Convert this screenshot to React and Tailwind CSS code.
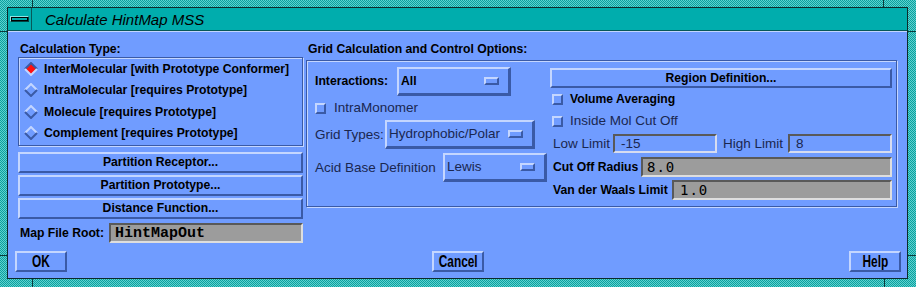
const raised = "border-2 border-t-[#c4d6ff] border-l-[#c4d6ff] border-b-[#3a5aa6] border-r-[#3a5aa6]";
const menuBevel = "border-t-2 border-l-2 border-b-[3px] border-r-[3px] border-t-[#c4d6ff] border-l-[#c4d6ff] border-b-[#3a5aa6] border-r-[#3a5aa6]";
const sunkenGray = "border-2 border-t-[#595959] border-l-[#595959] border-b-[#dedede] border-r-[#dedede] bg-[#9c9c9c]";
const sunkenOff = "border-2 border-t-[#595959] border-l-[#595959] border-b-[#d6dcf0] border-r-[#d6dcf0]";
const etched = "border border-[#3a5aa6] shadow-[inset_1px_1px_0_#c4d6ff,1px_1px_0_#c4d6ff]";
const off = "text-[#1a2750] font-normal text-[13.5px]";
const bold = "font-bold text-[12.2px]";
const stipple = "bg-[repeating-conic-gradient(#5ed2ce_0%_25%,#0c9f9f_0%_50%)] bg-size-[2px_2px]";

function Diamond({ on }) {
  return (
    <svg width="14" height="14" viewBox="0 0 14 14" className="shrink-0">
      <polygon points="7,1 13,7 7,13 1,7" fill={on ? "#ff1010" : "#709cff"} />
      <polyline points="1,7 7,1 13,7" fill="none" stroke={on ? "#3a5aa6" : "#c4d6ff"} strokeWidth="2" />
      <polyline points="1,7 7,13 13,7" fill="none" stroke={on ? "#c4d6ff" : "#3a5aa6"} strokeWidth="2" />
    </svg>
  );
}

function Check() {
  return <div className={`w-[11px] h-[11px] shrink-0 ${raised}`} />;
}

function OptionMenu({ value, width, disabled }) {
  return (
    <div className={`h-[29px] ${width} ${menuBevel} flex items-center justify-between pl-[2px] pr-[9px]`}>
      <span className={disabled ? off : bold}>{value}</span>
      <div className={`w-[15px] h-[8px] ${raised}`} />
    </div>
  );
}

function PushButton({ children }) {
  return (
    <div className={`h-[21px] ${raised} flex items-center justify-center ${bold}`}>
      {children}
    </div>
  );
}

function DialogButton({ children }) {
  return (
    <div className={`w-[52px] h-[21px] ${raised} flex items-center justify-center`}>
      <span className="inline-block font-bold text-[16px] scale-x-[0.74]">{children}</span>
    </div>
  );
}

const calcTypes = [
  "InterMolecular [with Prototype Conformer]",
  "IntraMolecular [requires Prototype]",
  "Molecule [requires Prototype]",
  "Complement [requires Prototype]",
];

export default function App() {
  return (
    <div className={`relative w-[916px] h-[287px] ${stipple} pt-[7px] pl-[7px] pr-[8px] pb-[8px] flex flex-col font-['Liberation_Sans',sans-serif] text-black leading-none`}>
      {/* frame resize ticks */}
      <div className="absolute left-[32px] top-0 w-px h-[7px] bg-[#0b3b3b]" />
      <div className="absolute left-[883px] top-0 w-px h-[7px] bg-[#0b3b3b]" />
      <div className="absolute left-0 top-[31px] w-[7px] h-px bg-[#0b3b3b]" />
      <div className="absolute right-0 top-[31px] w-[8px] h-px bg-[#0b3b3b]" />
      <div className="absolute left-0 top-[255px] w-[7px] h-px bg-[#0b3b3b]" />
      <div className="absolute right-0 top-[255px] w-[8px] h-px bg-[#0b3b3b]" />
      <div className="absolute left-[32px] bottom-0 w-px h-[8px] bg-[#0b3b3b]" />
      <div className="absolute left-[884px] bottom-0 w-px h-[8px] bg-[#0b3b3b]" />

      <div className="flex-1 flex flex-col border border-[#0b2b2b]">
        {/* Title bar */}
        <div className="h-[23px] bg-[#00adad] border-b border-[#075858] flex items-center shrink-0">
          <div className="w-[24px] h-full border-r border-[#075858] flex items-center justify-center">
            <div className="w-[19px] h-[6px] border border-t-[#8fe4e4] border-l-[#8fe4e4] border-b-[#034040] border-r-[#034040] bg-[#00adad] shadow-[inset_0_0_0_1px_#000]" />
          </div>
          <span className="ml-[13px] italic text-[15px]">Calculate HintMap MSS</span>
        </div>

        {/* Body */}
        <div className="flex-1 bg-[#709cff] border-t border-[#c4d6ff] flex flex-col">
          <div className="flex items-start pl-[10px] pr-[10px] pt-[9px] gap-[3px]">
            {/* Left column */}
            <div className="w-[285px] flex flex-col">
              <div className={`h-[16px] flex items-center pl-[2px] ${bold}`}>Calculation Type:</div>
              <div className={`h-[89px] ${etched} pl-[5px]`}>
                {calcTypes.map((t, i) => (
                  <div key={t} className="h-[21.5px] flex items-center gap-[6px]">
                    <Diamond on={i === 0} />
                    <span className={bold}>{t}</span>
                  </div>
                ))}
              </div>
              <div className="mt-[6px] flex flex-col gap-[2px]">
                <PushButton>Partition Receptor...</PushButton>
                <PushButton>Partition Prototype...</PushButton>
                <PushButton>Distance Function...</PushButton>
              </div>
              <div className="mt-[4px] h-[20px] flex items-center justify-between pl-[2px]">
                <span className={bold}>Map File Root:</span>
                <div className={`w-[194px] h-[20px] ${sunkenGray} flex items-center pl-[4px]`}>
                  <span className="font-['Liberation_Mono',monospace] font-bold text-[15px]">HintMapOut</span>
                </div>
              </div>
            </div>

            {/* Right column */}
            <div className="flex-1 flex flex-col">
              <div className={`h-[16px] flex items-center pl-[2px] ${bold}`}>Grid Calculation and Control Options:</div>
              <div className={`mt-[3px] h-[147px] ${etched} flex`}>
                {/* left sub column */}
                <div className="w-[240px] pl-[8px] flex flex-col">
                  <div className="mt-[6px] h-[29px] flex items-center">
                    <span className={`w-[82px] ${bold}`}>Interactions:</span>
                    <OptionMenu value="All" width="w-[114px]" />
                  </div>
                  <div className="h-[24px] flex items-center gap-[8px]">
                    <Check />
                    <span className={off}>IntraMonomer</span>
                  </div>
                  <div className="h-[29px] flex items-center">
                    <span className={`w-[70px] ${off}`}>Grid Types:</span>
                    <OptionMenu value="Hydrophobic/Polar" width="w-[150px]" disabled />
                  </div>
                  <div className="mt-[4px] h-[29px] flex items-center">
                    <span className={`w-[128px] ${off}`}>Acid Base Definition</span>
                    <OptionMenu value="Lewis" width="w-[104px]" disabled />
                  </div>
                </div>
                {/* right sub column */}
                <div className="ml-[3px] w-[342px] flex flex-col">
                  <div className="mt-[7px] h-[20px]">
                    <div className={`h-[20px] ${raised} flex items-center justify-center ${bold}`}>Region Definition...</div>
                  </div>
                  <div className="h-[22px] flex items-center gap-[7px] pl-[2px]">
                    <Check />
                    <span className={bold}>Volume Averaging</span>
                  </div>
                  <div className="h-[22px] flex items-center gap-[7px] pl-[2px]">
                    <Check />
                    <span className={off}>Inside Mol Cut Off</span>
                  </div>
                  <div className="mt-[2px] h-[19px] flex items-center pl-[3px]">
                    <span className={`w-[60px] ${off}`}>Low Limit</span>
                    <div className={`w-[104px] h-[19px] ${sunkenOff} flex items-center pl-[6px]`}>
                      <span className={off}>-15</span>
                    </div>
                    <span className={`ml-[6px] w-[65px] ${off}`}>High Limit</span>
                    <div className={`w-[104px] h-[19px] ${sunkenOff} flex items-center pl-[6px]`}>
                      <span className={off}>8</span>
                    </div>
                  </div>
                  <div className="mt-[4px] h-[20px] flex items-center justify-between pl-[3px]">
                    <span className={bold}>Cut Off Radius</span>
                    <div className={`w-[251px] h-[20px] ${sunkenGray} flex items-center pl-[4px]`}>
                      <span className="font-['DejaVu_Sans_Mono',monospace] text-[14px] tracking-[1px]">8.0</span>
                    </div>
                  </div>
                  <div className="mt-[3px] h-[20px] flex items-center justify-between pl-[3px]">
                    <span className={bold}>Van der Waals Limit</span>
                    <div className={`w-[220px] h-[20px] ${sunkenGray} flex items-center pl-[6px]`}>
                      <span className="font-['DejaVu_Sans_Mono',monospace] text-[14px] tracking-[1px]">1.0</span>
                    </div>
                  </div>
                </div>
              </div>
            </div>
          </div>

          {/* Dialog buttons */}
          <div className="mt-auto pb-[6px] pl-[7px] pr-[6px] flex justify-between">
            <DialogButton>OK</DialogButton>
            <DialogButton>Cancel</DialogButton>
            <DialogButton>Help</DialogButton>
          </div>
        </div>
      </div>
    </div>
  );
}
